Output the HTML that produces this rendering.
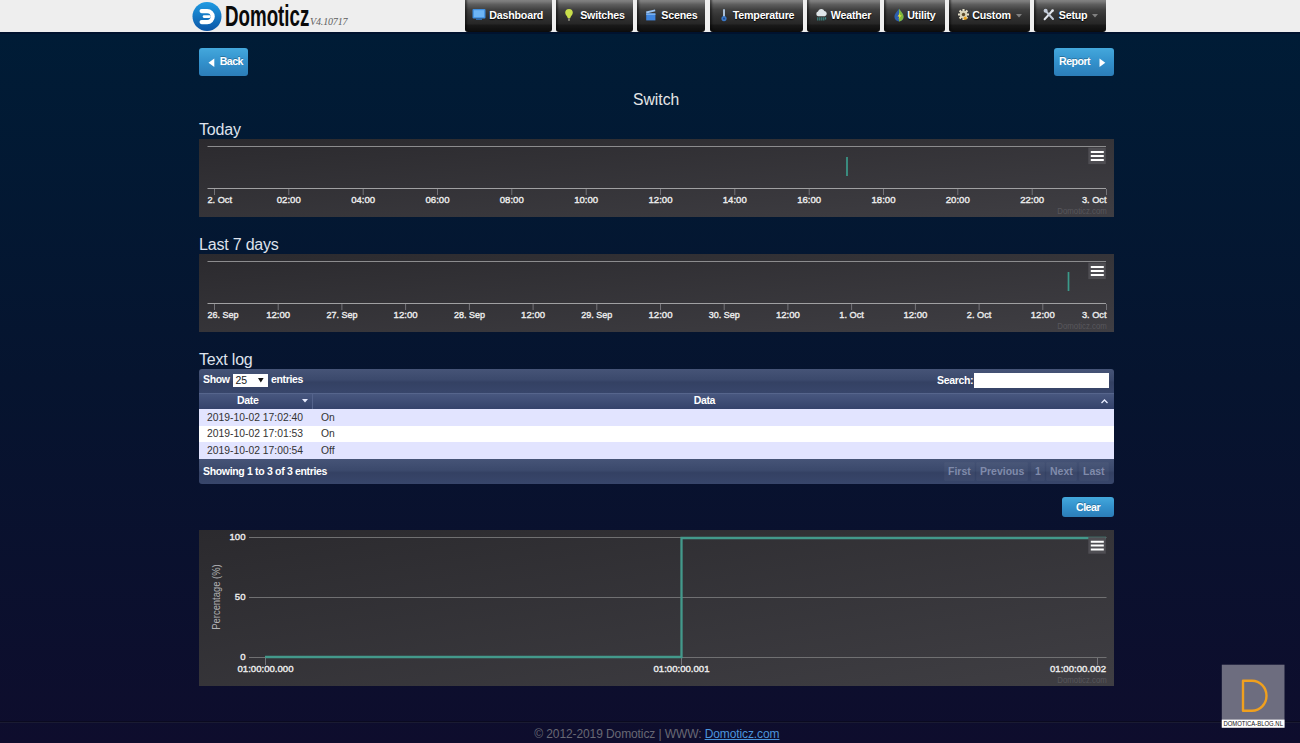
<!DOCTYPE html>
<html>
<head>
<meta charset="utf-8">
<title>Domoticz</title>
<style>
*{box-sizing:border-box;margin:0;padding:0}
html,body{width:1300px;height:743px;overflow:hidden}
body{font-family:"Liberation Sans",sans-serif;color:#eee;position:relative;
 background:linear-gradient(to bottom,#001c36 33px,#06142f 380px,#0e0d2d 743px);}
.abs{position:absolute}
/* header */
#hdr{position:absolute;left:0;top:0;width:1300px;height:32px;background:#eeeeee;}
#hdrline{position:absolute;left:0;top:32px;width:1300px;height:2px;background:#00122e}
.logo-text{position:absolute;left:224.5px;top:0.4px;font-weight:bold;font-size:28.8px;line-height:32px;color:#0a0a0a;transform-origin:0 0;transform:scaleX(0.651);letter-spacing:0px;white-space:nowrap}
.ver{position:absolute;left:310px;top:16px;font-family:"Liberation Serif",serif;font-style:italic;font-size:10px;letter-spacing:-0.15px;color:#606060;white-space:nowrap}
.nav{position:absolute;top:0;height:32px;border-radius:0 0 3px 3px;background:linear-gradient(to bottom,#888 0%,#5e5e5e 14%,#414141 30%,#313131 52%,#272727 74%,#191919 79%,#0c0c0c 100%);color:#fff;font-weight:bold;font-size:10.7px;letter-spacing:-0.22px;line-height:31px;white-space:nowrap;text-shadow:0 1px 1px #000;box-shadow:inset 3px 0 2px -1px rgba(0,0,0,.45)}
.nav span{position:absolute;top:0}
.nav svg{position:absolute}
/* buttons */
.btn{position:absolute;border-radius:3px;background:linear-gradient(to bottom,#44a8dc 0%,#3391cc 50%,#2c7db8 100%);color:#fff;font-weight:bold;font-size:10.6px;letter-spacing:-0.5px;white-space:nowrap;text-shadow:0 -1px 0 rgba(0,0,0,.25)}
h2{position:absolute;font-weight:normal;font-size:16px;letter-spacing:-0.2px;margin-top:0px;color:#dfe2ec;white-space:nowrap}
.chart{position:absolute;left:199px;width:915px;background:linear-gradient(to bottom right,#2b2a2e 0%,#3f3e43 100%);overflow:hidden}
.chart svg{position:absolute;left:0;top:0}
#tbl{position:absolute;left:199px;top:369px;width:915px;height:115px;font-size:10.5px;color:#fff}
#tbl .b{font-weight:bold;white-space:nowrap;line-height:13px;letter-spacing:-0.33px}
.tbar{position:absolute;left:0;width:915px;background:linear-gradient(to bottom,#465477 0%,#3b496c 45%,#344163 55%,#38466b 100%)}
.thead{position:absolute;left:0;width:915px;background:linear-gradient(to bottom,#48577f 0%,#34426b 100%);border-top:1px solid #56658c}
.row{position:absolute;left:0;width:915px;height:16.8px;color:#333;font-size:10.35px;line-height:16.6px;white-space:nowrap}
.row span{position:absolute;top:0.9px}
.pg{letter-spacing:0 !important;color:#808bab;padding:2px 3px;margin:-2px -3px;background:rgba(255,255,255,0.035);box-shadow:0 0 0 0.5px rgba(255,255,255,0.06)}
</style>
</head>
<body>
<div id="hdr"></div>
<div id="hdrline"></div>

<!-- logo -->
<svg class="abs" style="left:191px;top:1px" width="32" height="31" viewBox="0 0 32 31">
 <defs><linearGradient id="lg" x1="0" y1="0" x2="0" y2="1"><stop offset="0" stop-color="#1f9be2"/><stop offset="1" stop-color="#0b55a6"/></linearGradient></defs>
 <circle cx="16" cy="15.4" r="14.5" fill="url(#lg)"/>
 <path d="M10.6 10.1H16.2A5.5 5.5 0 0 1 16.2 21.1H10.6" stroke="#fff" stroke-width="4.2" stroke-linecap="round" fill="none"/>
 <path d="M13 15.6H18.3" stroke="#fff" stroke-width="2.6" stroke-linecap="round" fill="none"/>
</svg>
<div class="logo-text">Domoticz</div>
<div class="ver">V4.10717</div>

<!-- nav -->
<div class="nav" style="left:464.8px;width:87.4px"><span style="left:24.5px">Dashboard</span>
 <svg style="left:7px;top:8px" width="15" height="14" viewBox="0 0 15 14"><rect x="0.5" y="1" width="13" height="9.5" rx="1" fill="#3f8fe0"/><rect x="1.8" y="2.2" width="10.4" height="7" fill="#6db5f5"/><rect x="4" y="10.5" width="6" height="1.4" fill="#2f6fb5"/></svg></div>
<div class="nav" style="left:556.2px;width:76.5px"><span style="left:24px">Switches</span>
 <svg style="left:8px;top:8px" width="10" height="14" viewBox="0 0 10 14"><path d="M5 1A3.8 3.8 0 0 1 8.8 4.8C8.8 7 6.6 8.2 6.2 10.2H3.8C3.4 8.2 1.2 7 1.2 4.8A3.8 3.8 0 0 1 5 1Z" fill="#c9df4b"/><rect x="4.2" y="10.4" width="1.6" height="2.4" fill="#9a9a8a"/></svg></div>
<div class="nav" style="left:636.7px;width:68.5px"><span style="left:24.6px">Scenes</span>
 <svg style="left:8px;top:8px" width="12" height="14" viewBox="0 0 12 14"><path d="M1 3.6L10 1.4L10.4 3.2L1.4 5.4Z" fill="#9cc4f2"/><rect x="1.2" y="5.4" width="9.2" height="7" fill="#3f86e0"/><rect x="1.2" y="5.4" width="9.2" height="1.6" fill="#7ab0ee"/></svg></div>
<div class="nav" style="left:709.8px;width:93.2px"><span style="left:23px">Temperature</span>
 <svg style="left:10px;top:8px" width="8" height="15" viewBox="0 0 8 15"><rect x="3" y="1" width="2" height="8.5" rx="1" fill="#a8bfd8"/><circle cx="4" cy="10.6" r="2.6" fill="#3b78c8"/><circle cx="4" cy="10.6" r="1.1" fill="#1e4f96"/></svg></div>
<div class="nav" style="left:807.3px;width:72.3px"><span style="left:23.5px">Weather</span>
 <svg style="left:8px;top:8px" width="13" height="14" viewBox="0 0 13 14"><path d="M3 8.2A2.4 2.4 0 0 1 3 3.6A3.4 3.4 0 0 1 9.4 3A2.7 2.7 0 0 1 10 8.2Z" fill="#dfe5e8"/><path d="M2.8 9.2v3.4M4.8 9.2v3.4M6.8 9.2v3.4M8.8 9.2v3.4M10.6 9.2v2.4" stroke="#3d8f8a" stroke-width="1.1"/></svg></div>
<div class="nav" style="left:883.8px;width:60.8px"><span style="left:23.5px">Utility</span>
 <svg style="left:9px;top:8px" width="12" height="15" viewBox="0 0 12 15"><path d="M6 0.8C8.4 4 10.6 6.2 10.6 8.8A4.6 4.6 0 0 1 1.4 8.8C1.4 6.2 3.6 4 6 0.8Z" fill="#2d5fae"/><path d="M6 0.8C8.4 4 10.6 6.2 10.6 8.8A4.6 4.6 0 0 1 6 13.4Z" fill="#7fb83a"/><path d="M7.2 4.5L4.6 8.4H6.6L5.2 11.8L8.6 7.2H6.6Z" fill="#e8e04a"/></svg></div>
<div class="nav" style="left:948.8px;width:80.8px"><span style="left:23.5px">Custom</span>
 <svg style="left:8px;top:8px" width="13" height="14" viewBox="0 0 13 14"><g stroke="#e6e0c8" stroke-width="2.1"><path d="M6.5 1v11M1 6.5h11M2.6 2.6l7.8 7.8M10.4 2.6L2.6 10.4"/></g><circle cx="6.5" cy="6.5" r="3.7" fill="#d8d2b8"/><circle cx="6.5" cy="6.5" r="1.7" fill="#5a4a2a"/><circle cx="8.2" cy="10.2" r="1.6" fill="#e8a21a"/></svg>
 <svg style="left:67px;top:14px" width="6" height="4"><path d="M0 0H6L3 3.6Z" fill="#808080"/></svg></div>
<div class="nav" style="left:1033.8px;width:71.8px"><span style="left:25px">Setup</span>
 <svg style="left:9px;top:8px" width="12" height="14" viewBox="0 0 12 14"><path d="M1.6 11.2L9.2 3" stroke="#e3e7ee" stroke-width="2" stroke-linecap="round"/><path d="M2.4 2.6L10 11" stroke="#c3cbd8" stroke-width="2" stroke-linecap="round"/><circle cx="2.6" cy="2.8" r="2" fill="#c3cbd8"/><circle cx="9.6" cy="2.6" r="1.3" fill="#e3e7ee"/></svg>
 <svg style="left:58px;top:14px" width="6" height="4"><path d="M0 0H6L3 3.6Z" fill="#808080"/></svg></div>

<!-- buttons -->
<div class="btn" style="left:199.2px;top:48px;width:48.8px;height:28px;line-height:27px"><span class="abs" style="left:20.5px">Back</span>
 <svg class="abs" style="left:8.5px;top:10px" width="7" height="10"><path d="M6.3 0.5L0.5 4.8L6.3 9Z" fill="#fff"/></svg></div>
<div class="btn" style="left:1054px;top:48px;width:60px;height:28px;line-height:27px"><span class="abs" style="left:5px">Report</span>
 <svg class="abs" style="left:44.5px;top:10px" width="7" height="10"><path d="M0.5 0.5L6.3 4.8L0.5 9Z" fill="#fff"/></svg></div>

<div class="abs" style="left:633px;top:90.8px;font-size:15.7px;color:#e6e6e6">Switch</div>

<h2 style="left:199px;top:121px">Today</h2>
<div class="chart" id="c1" style="top:139px;height:78px"><svg width="915" height="78" viewBox="0 0 915 78" font-family="Liberation Sans, sans-serif" font-weight="normal" font-size="9.6px">
<path d="M8.5 7.5H907" stroke="#8c8c8e" stroke-width="1" fill="none"/>
<path d="M8.5 49.5H907" stroke="#a0a0a2" stroke-width="1" fill="none"/>
<path d="M15.5 50v6M89.8 50v6M164.2 50v6M238.5 50v6M312.8 50v6M387.2 50v6M461.5 50v6M535.8 50v6M610.2 50v6M684.5 50v6M758.8 50v6M833.2 50v6M907.5 50v6" stroke="#7c7b80" stroke-width="0.9" fill="none"/>
<text x="8.5" y="63.9" text-anchor="start" fill="#ececec" stroke="#ececec" stroke-width="0.38" textLength="24.5" lengthAdjust="spacingAndGlyphs">2. Oct</text>
<text x="89.8" y="63.9" text-anchor="middle" fill="#ececec" stroke="#ececec" stroke-width="0.38">02:00</text>
<text x="164.2" y="63.9" text-anchor="middle" fill="#ececec" stroke="#ececec" stroke-width="0.38">04:00</text>
<text x="238.5" y="63.9" text-anchor="middle" fill="#ececec" stroke="#ececec" stroke-width="0.38">06:00</text>
<text x="312.8" y="63.9" text-anchor="middle" fill="#ececec" stroke="#ececec" stroke-width="0.38">08:00</text>
<text x="387.2" y="63.9" text-anchor="middle" fill="#ececec" stroke="#ececec" stroke-width="0.38">10:00</text>
<text x="461.5" y="63.9" text-anchor="middle" fill="#ececec" stroke="#ececec" stroke-width="0.38">12:00</text>
<text x="535.8" y="63.9" text-anchor="middle" fill="#ececec" stroke="#ececec" stroke-width="0.38">14:00</text>
<text x="610.2" y="63.9" text-anchor="middle" fill="#ececec" stroke="#ececec" stroke-width="0.38">16:00</text>
<text x="684.5" y="63.9" text-anchor="middle" fill="#ececec" stroke="#ececec" stroke-width="0.38">18:00</text>
<text x="758.8" y="63.9" text-anchor="middle" fill="#ececec" stroke="#ececec" stroke-width="0.38">20:00</text>
<text x="833.2" y="63.9" text-anchor="middle" fill="#ececec" stroke="#ececec" stroke-width="0.38">22:00</text>
<text x="907.5" y="63.9" text-anchor="end" fill="#ececec" stroke="#ececec" stroke-width="0.38" textLength="24.5" lengthAdjust="spacingAndGlyphs">3. Oct</text>
<path d="M648 18V37" stroke="#3b9a8b" stroke-width="1.7" fill="none"/>
<rect x="889.3" y="8.6" width="17.5" height="16.5" fill="#4f4e53"/>
<path d="M891.8 13.1h13M891.8 17.0h13M891.8 20.9h13" stroke="#fff" stroke-width="2" fill="none"/><text x="907.8" y="75.2" text-anchor="end" fill="#58575c" font-weight="normal" font-size="9px" textLength="49.5" lengthAdjust="spacingAndGlyphs">Domoticz.com</text>
</svg></div>
<h2 style="left:199px;top:236px">Last 7 days</h2>
<div class="chart" id="c2" style="top:254px;height:78px"><svg width="915" height="78" viewBox="0 0 915 78" font-family="Liberation Sans, sans-serif" font-weight="normal" font-size="9.6px">
<path d="M8.5 7.5H907" stroke="#8c8c8e" stroke-width="1" fill="none"/>
<path d="M8.5 49.5H907" stroke="#a0a0a2" stroke-width="1" fill="none"/>
<path d="M15.5 50v6M79.2 50v6M142.9 50v6M206.6 50v6M270.4 50v6M334.1 50v6M397.8 50v6M461.5 50v6M525.2 50v6M588.9 50v6M652.6 50v6M716.4 50v6M780.1 50v6M843.8 50v6M907.5 50v6" stroke="#7c7b80" stroke-width="0.9" fill="none"/>
<text x="8.5" y="63.9" text-anchor="start" fill="#ececec" stroke="#ececec" stroke-width="0.38" textLength="31" lengthAdjust="spacingAndGlyphs">26. Sep</text>
<text x="79.2" y="63.9" text-anchor="middle" fill="#ececec" stroke="#ececec" stroke-width="0.38">12:00</text>
<text x="142.9" y="63.9" text-anchor="middle" fill="#ececec" stroke="#ececec" stroke-width="0.38" textLength="31" lengthAdjust="spacingAndGlyphs">27. Sep</text>
<text x="206.6" y="63.9" text-anchor="middle" fill="#ececec" stroke="#ececec" stroke-width="0.38">12:00</text>
<text x="270.4" y="63.9" text-anchor="middle" fill="#ececec" stroke="#ececec" stroke-width="0.38" textLength="31" lengthAdjust="spacingAndGlyphs">28. Sep</text>
<text x="334.1" y="63.9" text-anchor="middle" fill="#ececec" stroke="#ececec" stroke-width="0.38">12:00</text>
<text x="397.8" y="63.9" text-anchor="middle" fill="#ececec" stroke="#ececec" stroke-width="0.38" textLength="31" lengthAdjust="spacingAndGlyphs">29. Sep</text>
<text x="461.5" y="63.9" text-anchor="middle" fill="#ececec" stroke="#ececec" stroke-width="0.38">12:00</text>
<text x="525.2" y="63.9" text-anchor="middle" fill="#ececec" stroke="#ececec" stroke-width="0.38" textLength="31" lengthAdjust="spacingAndGlyphs">30. Sep</text>
<text x="588.9" y="63.9" text-anchor="middle" fill="#ececec" stroke="#ececec" stroke-width="0.38">12:00</text>
<text x="652.6" y="63.9" text-anchor="middle" fill="#ececec" stroke="#ececec" stroke-width="0.38" textLength="24.5" lengthAdjust="spacingAndGlyphs">1. Oct</text>
<text x="716.4" y="63.9" text-anchor="middle" fill="#ececec" stroke="#ececec" stroke-width="0.38">12:00</text>
<text x="780.1" y="63.9" text-anchor="middle" fill="#ececec" stroke="#ececec" stroke-width="0.38" textLength="24.5" lengthAdjust="spacingAndGlyphs">2. Oct</text>
<text x="843.8" y="63.9" text-anchor="middle" fill="#ececec" stroke="#ececec" stroke-width="0.38">12:00</text>
<text x="907.5" y="63.9" text-anchor="end" fill="#ececec" stroke="#ececec" stroke-width="0.38" textLength="24.5" lengthAdjust="spacingAndGlyphs">3. Oct</text>
<path d="M869.5 18V37" stroke="#3b9a8b" stroke-width="1.7" fill="none"/>
<rect x="889.3" y="8.6" width="17.5" height="16.5" fill="#4f4e53"/>
<path d="M891.8 13.1h13M891.8 17.0h13M891.8 20.9h13" stroke="#fff" stroke-width="2" fill="none"/><text x="907.8" y="75.2" text-anchor="end" fill="#58575c" font-weight="normal" font-size="9px" textLength="49.5" lengthAdjust="spacingAndGlyphs">Domoticz.com</text>
</svg></div>
<h2 style="left:199px;top:351px">Text log</h2>

<div class="chart" id="c3" style="top:530px;height:156px"><svg width="915" height="156" viewBox="0 0 915 156" font-family="Liberation Sans, sans-serif" font-weight="normal" font-size="9.6px">
<path d="M50 7.5H907.5M50 67.5H907.5M50 127.5H907.5" stroke="#707072" stroke-width="1" fill="none"/>
<path d="M66.5 128v7M482.5 128v7M898.5 128v7" stroke="#7c7b80" stroke-width="0.9" fill="none"/>
<text x="46.5" y="10.4" text-anchor="end" fill="#ececec" stroke="#ececec" stroke-width="0.38">100</text>
<text x="46.5" y="70.4" text-anchor="end" fill="#ececec" stroke="#ececec" stroke-width="0.38">50</text>
<text x="46.5" y="130.4" text-anchor="end" fill="#ececec" stroke="#ececec" stroke-width="0.38">0</text>
<text x="66.5" y="141.5" text-anchor="middle" fill="#ececec" stroke="#ececec" stroke-width="0.38">01:00:00.000</text>
<text x="482.5" y="141.5" text-anchor="middle" fill="#ececec" stroke="#ececec" stroke-width="0.38">01:00:00.001</text>
<text x="907" y="141.5" text-anchor="end" fill="#ececec" stroke="#ececec" stroke-width="0.38">01:00:00.002</text>
<text transform="translate(21.2,67) rotate(-90)" text-anchor="middle" fill="#b2b2b4" font-weight="normal" font-size="10.4px" textLength="65.5" lengthAdjust="spacingAndGlyphs">Percentage (%)</text>
<path d="M66 127H482.5V8H907" stroke="#43998b" stroke-width="2.3" fill="none" stroke-linejoin="miter"/>
<rect x="889.3" y="7.2" width="17.5" height="16.5" fill="#4f4e53"/>
<path d="M891.8 11.7h13M891.8 15.600000000000001h13M891.8 19.5h13" stroke="#fff" stroke-width="2" fill="none"/><text x="907.8" y="153.2" text-anchor="end" fill="#58575c" font-weight="normal" font-size="9px" textLength="49.5" lengthAdjust="spacingAndGlyphs">Domoticz.com</text>
</svg></div>

<!-- table -->
<div id="tbl">
 <div class="tbar" style="top:0;height:24px;border-radius:3px 3px 0 0">
  <span class="abs b" style="left:4px;top:4px">Show</span>
  <div class="abs" style="left:34px;top:4.5px;width:35px;height:13.5px;background:#fff;color:#222;font-size:10.5px;line-height:13.5px;padding-left:2.5px">25
   <svg class="abs" style="left:25px;top:4.5px" width="6" height="5"><path d="M0 0H5.6L2.8 4.4Z" fill="#111"/></svg></div>
  <span class="abs b" style="left:72px;top:4px">entries</span>
  <span class="abs b" style="left:738px;top:5px">Search:</span>
  <div class="abs" style="left:775.4px;top:4.4px;width:134.6px;height:14.6px;background:#fff"></div>
 </div>
 <div class="thead" style="top:23.5px;height:16.5px">
  <span class="abs b" style="left:38px;top:0.5px">Date</span>
  <svg class="abs" style="left:102.5px;top:5.2px" width="7" height="4"><path d="M0 0H6L3 3.4Z" fill="#e8ecff"/></svg>
  <div class="abs" style="left:113px;top:0;width:1px;height:16px;background:#54638c"></div>
  <span class="abs b" style="left:494.7px;top:0.5px">Data</span>
  <svg class="abs" style="left:902px;top:5px" width="7" height="5"><path d="M0.5 4L3.5 1L6.5 4" stroke="#e8ecff" stroke-width="1.3" fill="none"/></svg>
 </div>
 <div class="row" style="top:40px;background:#e2e4ff"><span style="left:8px">2019-10-02 17:02:40</span><span style="left:122px">On</span></div>
 <div class="row" style="top:56.6px;background:#ffffff"><span style="left:8px">2019-10-02 17:01:53</span><span style="left:122px">On</span></div>
 <div class="row" style="top:73.2px;background:#e2e4ff"><span style="left:8px">2019-10-02 17:00:54</span><span style="left:122px">Off</span></div>
 <div class="tbar" style="top:90px;height:25px;border-radius:0 0 3px 3px">
  <span class="abs b" style="left:4px;top:6px">Showing 1 to 3 of 3 entries</span>
  <span class="abs b pg" style="left:749px;top:6px">First</span>
  <span class="abs b pg" style="left:781px;top:6px">Previous</span>
  <span class="abs b pg" style="left:836px;top:6px">1</span>
  <span class="abs b pg" style="left:851px;top:6px">Next</span>
  <span class="abs b pg" style="left:884px;top:6px">Last</span>
 </div>
</div>
<div class="btn" style="left:1062px;top:497px;width:52px;height:20px;line-height:20px;text-align:center">Clear</div>

<!-- watermark -->
<svg class="abs" style="left:1221px;top:664px;z-index:5" width="65" height="65" viewBox="0 0 65 65">
 <rect x="0.8" y="0.7" width="62.7" height="63" fill="#6d6d7f"/>
 <rect x="0.8" y="55.6" width="62.7" height="8.1" fill="#ffffff"/>
 <path d="M22 16.8H31A14.5 15 0 0 1 31 46.8H22Z" stroke="#f0a01e" stroke-width="2.4" fill="none" stroke-linejoin="round"/>
 <text x="32.2" y="62.2" text-anchor="middle" font-family="Liberation Sans, sans-serif" font-size="6.4px" fill="#111" textLength="59.5" lengthAdjust="spacingAndGlyphs">DOMOTICA-BLOG.NL</text>
</svg>

<!-- footer -->
<div class="abs" style="left:0;top:720.6px;width:1300px;height:1.2px;background:#0a0a20"></div><div class="abs" style="left:0;top:721.8px;width:1300px;height:1.4px;background:#1a1b32"></div>
<div class="abs" style="left:534.3px;top:726.5px;font-size:12px;letter-spacing:-0.1px;color:#686874;white-space:nowrap">© 2012-2019 Domoticz | WWW: <span style="color:#4b95dc;text-decoration:underline">Domoticz.com</span></div>
</body>
</html>
